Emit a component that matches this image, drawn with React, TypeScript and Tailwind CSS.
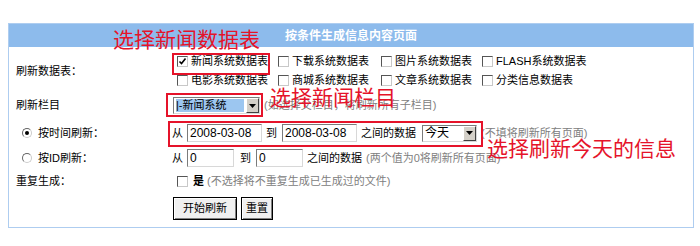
import React from 'react';

const cjk = "font-['Liberation_Sans','Noto_Sans_CJK_SC',sans-serif]";

function Box({ checked = false }: { checked?: boolean }) {
  return (
    <span className="inline-flex items-center justify-center w-[11px] h-[11px] bg-white border border-t-[#555] border-l-[#555] border-r-[#c8c8c8] border-b-[#c8c8c8] shrink-0">
      {checked && (
        <svg width="9" height="9" viewBox="0 0 9 9">
          <path d="M1.5 4.5 L3.5 6.5 L7.5 1.5" stroke="#000" strokeWidth="1.6" fill="none" />
        </svg>
      )}
    </span>
  );
}

function Radio({ on = false }: { on?: boolean }) {
  return (
    <span className="inline-flex items-center justify-center w-[10px] h-[10px] rounded-full bg-white border border-t-[#666] border-l-[#666] border-r-[#ccc] border-b-[#ccc] shrink-0">
      {on && <span className="w-[4px] h-[4px] rounded-full bg-black" />}
    </span>
  );
}

function TextBox({ value, w }: { value: string; w: string }) {
  return (
    <span className={`${w} inline-flex items-center h-[18px] bg-white border border-t-[#7b7b7b] border-l-[#7b7b7b] border-r-[#d8d8d8] border-b-[#d8d8d8] pl-[2px] text-[12px] text-black leading-none`}>
      {value}
    </span>
  );
}

function Arrow() {
  return (
    <span className="w-[13px] h-full flex items-center justify-center bg-[#d4d0c8] border border-t-[#fff] border-l-[#fff] border-r-[#404040] border-b-[#404040]">
      <svg width="7" height="4" viewBox="0 0 7 4">
        <path d="M0 0 H7 L3.5 4 Z" fill="#000" />
      </svg>
    </span>
  );
}

const tables = [
  ['新闻系统数据表', '下载系统数据表', '图片系统数据表', 'FLASH系统数据表'],
  ['电影系统数据表', '商城系统数据表', '文章系统数据表', '分类信息数据表'],
];

export default function App() {
  return (
    <div className={`relative w-[700px] h-[246px] bg-white overflow-hidden text-[11px] text-black ${cjk}`}>
      <div className="pt-[23px] pl-[8px]">
        <div className="w-[686px] border border-[#aecdf0]">
          {/* header */}
          <div className="h-[23px] bg-[#8dbbec] flex items-center justify-center text-white font-bold text-[12px]">
            按条件生成信息内容页面
          </div>

          {/* data tables */}
          <div className="flex h-[48px] items-center">
            <div className="w-[163px] pl-[7px]">刷新数据表：</div>
            <div className="flex flex-col gap-[8px] pl-[5px]">
              {tables.map((row, i) => (
                <div key={i} className="flex">
                  {row.map((t, j) => (
                    <div key={t} className={`flex items-center gap-[3px] ${j === 3 ? '' : j === 1 ? 'w-[103px]' : 'w-[101px]'}`}>
                      <Box checked={i === 0 && j === 0} />
                      <span className="leading-none">{t}</span>
                    </div>
                  ))}
                </div>
              ))}
            </div>
          </div>

          {/* column */}
          <div className="flex h-[21px] items-center">
            <div className="w-[163px] pl-[7px]">刷新栏目</div>
            <div className="flex items-center pl-[1px]">
              <span className="w-[87px] h-[17px] flex items-center bg-white border border-t-[#7b7b7b] border-l-[#7b7b7b] border-r-[#d8d8d8] border-b-[#d8d8d8]">
                <span className="flex-1 h-[13px] mx-[2px] bg-[#9cc6f0] flex items-center leading-none">|-新闻系统</span>
                <Arrow />
              </span>
              <span className="ml-[4px] text-[#808080]">(如选择父栏目，将刷新所有子栏目)</span>
            </div>
          </div>

          {/* by time */}
          <div className="flex h-[34px] items-center">
            <div className="w-[163px] pl-[13px] flex items-center gap-[6px]">
              <Radio on />
              <span>按时间刷新：</span>
            </div>
            <div className="flex items-center">
              <span className="mr-[4px]">从</span>
              <TextBox value="2008-03-08" w="w-[75px]" />
              <span className="ml-[4px] mr-[5px]">到</span>
              <TextBox value="2008-03-08" w="w-[75px]" />
              <span className="ml-[4px]">之间的数据</span>
              <span className="ml-[6px] w-[55px] h-[17px] flex items-center bg-white border border-t-[#7b7b7b] border-l-[#7b7b7b] border-r-[#d8d8d8] border-b-[#d8d8d8]">
                <span className="flex-1 pl-[2px] text-[12px] leading-none">今天</span>
                <Arrow />
              </span>
              <span className="ml-[4px] text-[#808080]">(不填将刷新所有页面)</span>
            </div>
          </div>

          {/* by id */}
          <div className="flex h-[16px] items-center">
            <div className="w-[163px] pl-[13px] flex items-center gap-[6px]">
              <Radio />
              <span>按ID刷新：</span>
            </div>
            <div className="flex items-center">
              <span className="mr-[4px]">从</span>
              <TextBox value="0" w="w-[47px]" />
              <span className="ml-[6px] mr-[5px]">到</span>
              <TextBox value="0" w="w-[47px]" />
              <span className="ml-[4px]">之间的数据</span>
              <span className="ml-[4px] text-[#808080]">(两个值为0将刷新所有页面)</span>
            </div>
          </div>

          {/* repeat */}
          <div className="flex h-[30px] items-center">
            <div className="w-[163px] pl-[7px]">重复生成：</div>
            <div className="flex items-center pl-[5px]">
              <Box />
              <span className="ml-[5px] font-bold">是</span>
              <span className="ml-[3px] text-[#808080]">(不选择将不重复生成已生成过的文件)</span>
            </div>
          </div>

          {/* buttons */}
          <div className="flex h-[25px] items-center mb-[6px]">
            <div className="w-[163px]" />
            <div className="flex items-center gap-[4px] pl-[1px]">
              <span className="w-[64px] h-[23px] flex items-center justify-center bg-[#f0f0f0] border border-black shadow-[inset_1px_1px_0_#fff,inset_-1px_-1px_0_#808080]">开始刷新</span>
              <span className="w-[32px] h-[23px] flex items-center justify-center bg-[#f0f0f0] border border-black shadow-[inset_1px_1px_0_#fff,inset_-1px_-1px_0_#808080]">重置</span>
            </div>
          </div>
        </div>
      </div>

      {/* annotations */}
      <div className="absolute left-[172px] top-[53px] w-[98px] h-[22px] border-2 border-[#e5132a]" />
      <div className="absolute left-[166px] top-[93px] w-[97px] h-[24px] border-2 border-[#e5132a]" />
      <div className="absolute left-[168px] top-[121px] w-[315px] h-[26px] border-2 border-[#e5132a]" />
      <div className="absolute left-[113px] top-[28px] text-[21px] leading-none text-[#e5132a] font-['Noto_Sans_CJK_SC',sans-serif]">选择新闻数据表</div>
      <div className="absolute left-[270px] top-[86px] text-[21px] leading-none text-[#e5132a] font-['Noto_Sans_CJK_SC',sans-serif]">选择新闻栏目</div>
      <div className="absolute left-[487px] top-[137px] text-[21px] leading-none text-[#e5132a] font-['Noto_Sans_CJK_SC',sans-serif]">选择刷新今天的信息</div>
    </div>
  );
}
